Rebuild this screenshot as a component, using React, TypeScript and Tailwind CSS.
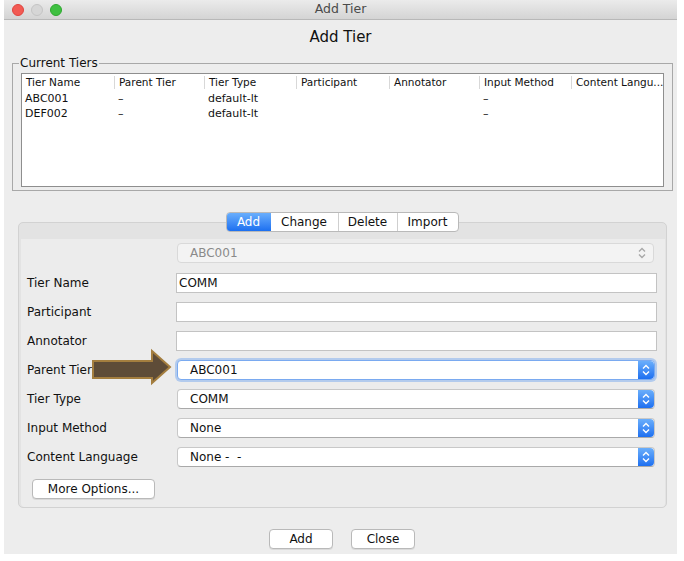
import React from "react";

const font = { fontFamily: '"DejaVu Sans", "Liberation Sans", sans-serif' };

function Stepper({ light }: { light?: boolean }) {
  return (
    <svg width="8" height="12" viewBox="0 0 8 12" className="block">
      <path d="M1 4.5 L4 1.5 L7 4.5" fill="none" stroke={light ? "#a8a8a8" : "#ffffff"} strokeWidth="1.4" />
      <path d="M1 7.5 L4 10.5 L7 7.5" fill="none" stroke={light ? "#a8a8a8" : "#ffffff"} strokeWidth="1.4" />
    </svg>
  );
}

function Combo({ value, focused }: { value: string; focused?: boolean }) {
  return (
    <div
      className={
        "flex h-[20px] w-[478px] ml-[1px] items-stretch rounded-[4px] bg-white " +
        (focused
          ? "border border-[#7aaaf0] shadow-[0_0_0_2px_rgba(110,165,240,0.45)]"
          : "border border-[#c8c8c8] border-b-[#a9a9a9]")
      }
    >
      <div className="flex-1 whitespace-pre pl-[12px] text-[12px] leading-[18px] text-[#111]">{value}</div>
      <div className="flex w-[16px] items-center justify-center rounded-r-[4px] bg-gradient-to-b from-[#6aaefb] to-[#1d6ff0]">
        <Stepper />
      </div>
    </div>
  );
}

function TextInput({ value }: { value?: string }) {
  return (
    <div className="h-[20px] w-[481px] border border-[#c3c3c3] bg-white pl-[2px] text-[12px] leading-[18px] text-[#111]">
      {value}
    </div>
  );
}

function Row({ label, children }: { label: string; children: React.ReactNode }) {
  return (
    <div className="flex h-[20px] items-center">
      <div className="w-[155px] pl-[6px] text-[12px] text-[#111]">{label}</div>
      {children}
    </div>
  );
}

function Btn({ children, w }: { children: React.ReactNode; w: string }) {
  return (
    <div
      className={
        w +
        " flex h-[20px] items-center justify-center rounded-[4px] border border-[#b9b9b9] bg-white text-[12px] text-[#111] shadow-[0_1px_0_rgba(0,0,0,0.08)]"
      }
    >
      {children}
    </div>
  );
}

export default function App() {
  const cols = [
    { name: "Tier Name", w: "w-[93px]" },
    { name: "Parent Tier", w: "w-[90px]" },
    { name: "Tier Type", w: "w-[92px]" },
    { name: "Participant", w: "w-[93px]" },
    { name: "Annotator", w: "w-[90px]" },
    { name: "Input Method", w: "w-[92px]" },
    { name: "Content Langu...", w: "flex-1" },
  ];
  const rows = [
    ["ABC001", "–", "default-lt", "", "", "–", ""],
    ["DEF002", "–", "default-lt", "", "", "–", ""],
  ];
  return (
    <div className="relative h-[561px] w-[684px] overflow-hidden bg-white pl-[4px]" style={font}>
      <div className="flex h-[554px] w-[673px] flex-col bg-[#ededed]">
        {/* title bar */}
        <div className="relative flex h-[20px] items-center border-b border-[#b8b8b8] bg-gradient-to-b from-[#ebebeb] to-[#d4d4d4]">
          <div className="flex gap-[7px] pl-[8px]">
            <div className="h-[12px] w-[12px] rounded-full bg-[#f25a53] border border-[#e0443e]" />
            <div className="h-[12px] w-[12px] rounded-full bg-[#d6d6d6] border border-[#c4c4c4]" />
            <div className="h-[12px] w-[12px] rounded-full bg-[#3fc041] border border-[#2ea82f]" />
          </div>
          <div className="flex-1 pr-[58px] text-center text-[12.5px] text-[#4a4a4a]">Add Tier</div>
        </div>

        {/* heading */}
        <div className="flex h-[32px] items-center justify-center pt-[2px] text-[15px] text-[#111]">Add Tier</div>

        {/* Current tiers group */}
        <fieldset className="ml-[8px] mr-[5px] mt-[4px] h-[135px] border border-[#a8a8a8] pl-[8px] pr-[8px]">
          <legend className="ml-[-2px] px-[1px] text-[12px] leading-[14px] text-[#111]">Current Tiers</legend>
          <div className="mt-[3px] h-[114px] border border-[#8e8e8e] bg-white">
            <div className="flex h-[17px] items-center">
              {cols.map((c, i) => (
                <div
                  key={c.name}
                  className={
                    c.w +
                    " truncate pl-[4px] text-[10.5px] leading-[13px] text-[#111] " +
                    (i < cols.length - 1 ? "border-r border-[#d8d8d8]" : "")
                  }
                >
                  {c.name}
                </div>
              ))}
            </div>
            {rows.map((r, ri) => (
              <div key={ri} className="flex h-[15px] items-center">
                {r.map((v, i) => (
                  <div key={i} className={cols[i].w + " pl-[3px] text-[11px] leading-[15px] text-[#111]"}>
                    {v}
                  </div>
                ))}
              </div>
            ))}
          </div>
        </fieldset>

        {/* tabs */}
        <div className="relative z-10 ml-[14px] mr-[10px] mt-[21px] flex justify-center pl-[1px] pr-[2px]">
          <div className="flex h-[20px] overflow-hidden rounded-[4px] border border-[#b9b9b9] bg-white text-[12px] text-[#111]">
            <div className="flex w-[44px] items-center justify-center bg-gradient-to-b from-[#69aefc] to-[#1b6ff0] text-white">Add</div>
            <div className="flex w-[68px] items-center justify-center border-r border-[#cfcfcf]">Change</div>
            <div className="flex w-[59px] items-center justify-center border-r border-[#cfcfcf]">Delete</div>
            <div className="flex w-[60px] items-center justify-center">Import</div>
          </div>
        </div>

        {/* panel */}
        <div className="ml-[14px] mr-[10px] mt-[-10px] h-[286px] rounded-[5px] border border-[#d2d2d2] bg-[#e3e3e3] pl-[2px] pr-[1px] pt-[16px]">
          <div className="h-[268px] rounded-b-[4px] bg-[#ececec] pt-[4px]">
            {/* disabled combo */}
            <div className="flex h-[20px] items-center">
              <div className="w-[156px]" />
              <div className="flex h-[20px] w-[477px] items-center rounded-[4px] border border-[#d9d9d9] bg-[#f3f3f3]">
                <div className="flex-1 pl-[12px] text-[12px] text-[#8a8a8a]">ABC001</div>
                <div className="pr-[7px]">
                  <Stepper light />
                </div>
              </div>
            </div>

            <div className="mt-[10px] flex flex-col gap-[9px]">
              <Row label="Tier Name">
                <TextInput value="COMM" />
              </Row>
              <Row label="Participant">
                <TextInput />
              </Row>
              <Row label="Annotator">
                <TextInput />
              </Row>
              <Row label="Parent Tier">
                <Combo value="ABC001" focused />
              </Row>
              <Row label="Tier Type">
                <Combo value="COMM" />
              </Row>
              <Row label="Input Method">
                <Combo value="None" />
              </Row>
              <Row label="Content Language">
                <Combo value="None -  -" />
              </Row>
            </div>

            <div className="mt-[12px] pl-[11px]">
              <Btn w="w-[123px]">More Options...</Btn>
            </div>
          </div>
        </div>

        {/* bottom buttons */}
        <div className="mt-[21px] flex justify-center gap-[18px] pl-[3px]">
          <Btn w="w-[64px]">Add</Btn>
          <Btn w="w-[64px]">Close</Btn>
        </div>
      </div>

      {/* annotation arrow overlay */}
      <svg
        className="absolute left-[90px] top-[348px]"
        width="84"
        height="38"
        viewBox="0 0 84 38"
      >
        <path
          d="M3 13 L62 13 L62 3 L80 19 L62 35 L62 30 L3 30 Z"
          fill="#5e4c38"
          stroke="#a47e3f"
          strokeWidth="2"
          strokeLinejoin="miter"
        />
      </svg>
    </div>
  );
}
